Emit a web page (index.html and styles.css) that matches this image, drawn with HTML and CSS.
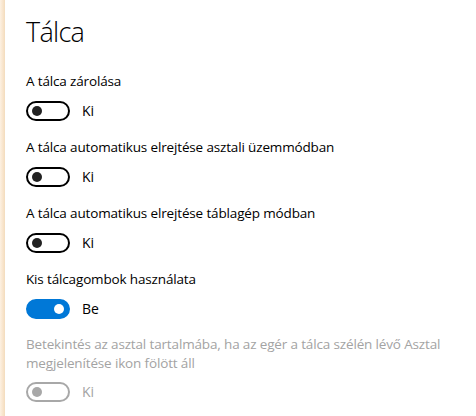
FILE: index.html
```html
<!DOCTYPE html>
<html lang="hu">
<head>
<meta charset="utf-8">
<link rel="stylesheet" href="styles.css">
</head>
<body>
<div class="frame">
  <div class="edge"></div>
  <main class="page">
    <h1 class="title">Tálca</h1>

    <section class="setting">
      <div class="label">A tálca zárolása</div>
      <div class="toggle-row">
        <span class="toggle off"><span class="knob"></span></span>
        <span class="state">Ki</span>
      </div>
    </section>

    <section class="setting">
      <div class="label">A tálca automatikus elrejtése asztali üzemmódban</div>
      <div class="toggle-row">
        <span class="toggle off"><span class="knob"></span></span>
        <span class="state">Ki</span>
      </div>
    </section>

    <section class="setting">
      <div class="label">A tálca automatikus elrejtése táblagép módban</div>
      <div class="toggle-row">
        <span class="toggle off"><span class="knob"></span></span>
        <span class="state">Ki</span>
      </div>
    </section>

    <section class="setting">
      <div class="label">Kis tálcagombok használata</div>
      <div class="toggle-row">
        <span class="toggle on"><span class="knob"></span></span>
        <span class="state">Be</span>
      </div>
    </section>

    <section class="setting disabled">
      <div class="label">Betekintés az asztal tartalmába, ha az egér a tálca szélén lévő Asztal megjelenítése ikon fölött áll</div>
      <div class="toggle-row">
        <span class="toggle off"><span class="knob"></span></span>
        <span class="state">Ki</span>
      </div>
    </section>
  </main>
</div>
</body>
</html>
```

FILE: styles.css
```css
* { box-sizing: border-box; }
html, body { margin: 0; padding: 0; background: #fff; }
body {
  font-family: "Open Sans", "Noto Sans", "Liberation Sans", sans-serif;
  color: #000;
  width: 476px;
  height: 416px;
  overflow: hidden;
}
.frame {
  display: flex;
  height: 416px;
}
.edge {
  width: 5px;
  flex: none;
  background: linear-gradient(to right, #fdf1e2 0, #f8e4cb 60%, #f3dcbd 100%);
}
.page {
  flex: 1;
  padding: 13px 14px 0 21px;
}
.title {
  margin: 0 0 20px 0;
  font-size: 27px;
  font-weight: 300;
  line-height: 38px;
  letter-spacing: -0.7px;
}
.setting {
  margin-bottom: 16px;
}
.label {
  font-size: 13.5px;
  line-height: 20px;
  letter-spacing: -0.15px;
}
.toggle-row {
  display: flex;
  align-items: center;
  gap: 12px;
  margin-top: 10px;
  height: 20px;
}
.toggle {
  width: 44px;
  height: 20px;
  border-radius: 10px;
  border: 2px solid #000;
  display: flex;
  align-items: center;
  padding: 0 4px;
  flex: none;
}
.knob {
  width: 10px;
  height: 10px;
  border-radius: 50%;
  background: #222;
}
.toggle.on {
  background: #0078d7;
  border-color: #0078d7;
  justify-content: flex-end;
}
.toggle.on .knob { background: #fff; }
.state {
  font-size: 14px;
  line-height: 20px;
}
.disabled .label { color: #a3a3a3; line-height: 19px; }
.disabled .toggle-row { margin-top: 9px; }
.disabled .state { color: #a3a3a3; }
.disabled .toggle { border-color: #a8a8a8; }
.disabled .knob { background: #a8a8a8; }
```
